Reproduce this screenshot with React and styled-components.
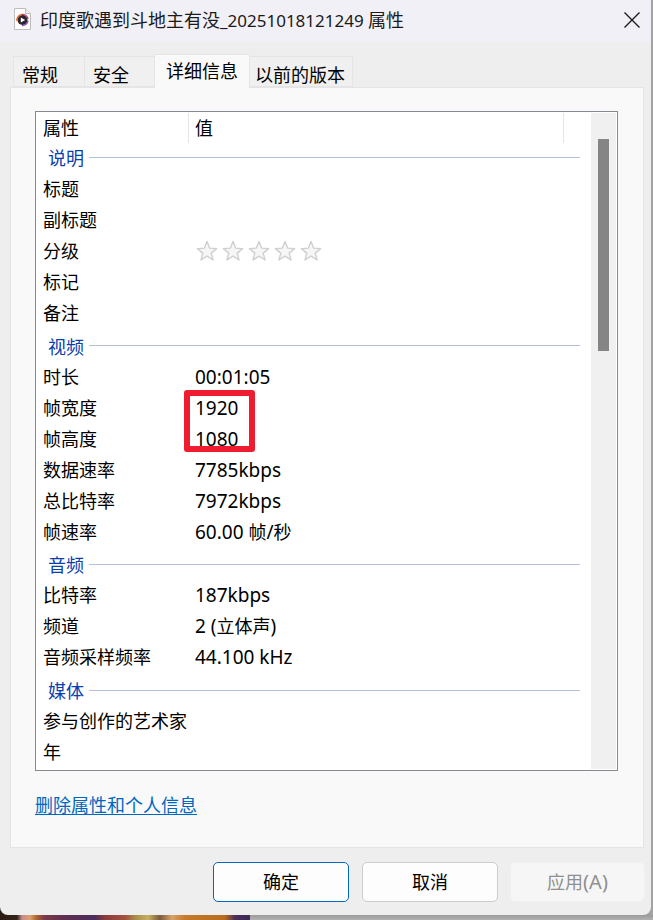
import React from "react";
import styled, { createGlobalStyle } from "styled-components";

const Global = createGlobalStyle`
  html, body { margin: 0; padding: 0; width: 653px; height: 920px; overflow: hidden; background: #a3a3a3; }
  * { box-sizing: border-box; }
  body { font-family: "Noto Sans", "Noto Sans CJK SC", sans-serif; font-size: 18px; color: #000; }
`;

const Page = styled.div`
  width: 653px; height: 920px; display: flex; flex-direction: column; overflow: hidden;
  background: linear-gradient(90deg, #2a1c14 0, #2a1c14 12px, #a3a3a3 12px);
`;
const Win = styled.div`
  width: 651px; height: 915px; flex: none; background: #eeeeee;
  border-radius: 0 0 8px 8px; display: flex; flex-direction: column;
`;
const Wallpaper = styled.div`
  height: 5px; flex: none;
  background:
    linear-gradient(90deg, #2a1c14 0, #33241a 17px, #c98a8a 22px, #d9a070 30px, #b3682f 36px, #7a3a4a 44px, #5e2f50 65px, #4d2c5c 95px, #8a3c3a 105px, #a3503e 125px, #a88c4a 135px, #c4b060 148px, #7c5a3e 160px, #d6a26a 172px, #c8792a 185px, #b86a1e 225px, #4a2f5a 235px, #3d2a55 250px) left top / 250px 100% no-repeat,
    linear-gradient(180deg, #9a9a9a, #b2b2b2);
`;
const TitleBar = styled.div`
  height: 42px; flex: none; background: #f2f0f7; display: flex; align-items: center; padding-left: 14px;
`;
const FileSvg = styled.svg`
  flex: none; margin-top: -4px;
`;
const Title = styled.div`
  margin-left: 9px; font-size: 18px; line-height: 24px; color: #1a1a1a; white-space: nowrap; flex: 1; margin-top: -2px;
`;
const TitleNum = styled.span` font-size: 17px; `;
const Close = styled.div`
  width: 18px; height: 18px; margin-right: 10px; margin-top: -3px; display: flex;
`;
const Tabs = styled.div`
  height: 45px; flex: none; display: flex; align-items: flex-end; padding-left: 13px; position: relative; z-index: 1;
`;
const Tab = styled.div`
  width: ${p => p.$w}px; height: 31px; flex: none;
  border: 1px solid #e5e5e5; margin-left: -1px;
  background: #f0f0f0; line-height: 24px; white-space: nowrap;
  display: flex; align-items: center; padding: 6px 0 0 ${p => p.$left}px;
  &:first-child { margin-left: 0; }
`;
const ActiveTab = styled.div`
  width: ${p => p.$w}px; height: 34px; flex: none;
  border: 1px solid #e5e5e5; border-bottom: none; margin: 0 0 -1px -1px;
  background: #f9f9f9; line-height: 24px; white-space: nowrap; position: relative;
  display: flex; align-items: center; justify-content: center; padding-bottom: 2px;
`;
const Panel = styled.div`
  height: 761px; flex: none; margin: 0 7px 0 10px; background: #f9f9f9; border: 1px solid #e5e5e5;
  padding: 23px 25px 0 24px; display: flex; flex-direction: column;
`;
const ListBox = styled.div`
  height: 660px; flex: none; border: 1px solid #868a91; background: #fff; display: flex; padding: 1px; overflow: hidden;
`;
const ListBody = styled.div`
  flex: 1; min-width: 0; position: relative;
`;
const Header = styled.div`
  height: 30px; display: flex; align-items: center; line-height: 24px;
`;
const HeadCell = styled.div`
  width: ${p => p.$w}px; height: 30px; border-right: 1px solid #e5e5e5;
  padding-left: 6px; display: flex; align-items: center;
`;
const Group = styled.div`
  height: ${p => p.$h}px; display: flex; align-items: center; color: #0a3fae;
  padding: ${p => p.$top}px 11px ${p => p.$bottom}px 11px;
`;
const GroupLine = styled.div`
  flex: 1; height: 1px; background: #b4c0db; margin-left: 5px;
`;
const Row = styled.div`
  height: 31px; display: flex; align-items: center; white-space: nowrap; line-height: 24px;
`;
const Name = styled.div` width: 152px; padding-left: 6px; flex: none; `;
const Value = styled.div` flex: none; display: flex; align-items: center; padding-left: 6px; font-size: 19px; white-space: pre; `;
const Cjk = styled.span` font-size: 18px; `;
const Stars = styled.div` display: flex; gap: 4px; margin-left: 1px; `;
const Mark = styled.div`
  position: absolute; left: 147px; top: 277px; width: 71px; height: 62px;
  border: 6px solid #ee1c2e; border-radius: 3px;
`;
const Scroll = styled.div`
  width: 25px; flex: none; background: #f0f0f0; display: flex; justify-content: center; padding-top: 26px;
`;
const Thumb = styled.div` width: 11px; height: 212px; background: #858585; `;
const LinkRow = styled.a`
  margin-top: 22px; color: #0067c0; text-decoration: underline; line-height: 24px; align-self: flex-start; text-underline-offset: 2px;
`;
const Footer = styled.div`
  flex: 1; display: flex; padding: 14px 0 0 213px; gap: 13px;
`;
const Btn = styled.div`
  width: ${p => p.$w}px; height: 40px; flex: none; border-radius: 5px; display: flex; align-items: center; justify-content: center;
  padding-bottom: 2px;
  background: ${p => (p.$disabled ? "#f6f6f6" : "#fdfdfd")};
  border: 1px solid ${p => (p.$primary ? "#0067c0" : p.$disabled ? "#f0f0f0" : "#cccccc")};
  color: ${p => (p.$disabled ? "#8f8f8f" : "#000")};
  &:last-child { margin-left: -1px; }
`;
const BtnLatin = styled.span` font-size: 20px; `;

const Star = () => (
  <svg width="22" height="22" viewBox="0 0 22 22">
    <path d="M11 1.5l2.6 6.6 7 .5-5.4 4.5 1.8 6.9L11 16.2 5 20l1.8-6.9L1.4 8.6l7-.5z" fill="#f6f6f6" stroke="#cfcfcf" strokeWidth="1.4" strokeLinejoin="round" />
  </svg>
);

const FileIcon = () => (
  <FileSvg width="17" height="22" viewBox="0 0 17 22">
    <path d="M.5.5h11l5 5v16H.5z" fill="#fff" stroke="#bdbdbd" />
    <path d="M11.5.5v5h5" fill="#eee" stroke="#bdbdbd" />
    <circle cx="8.5" cy="12" r="5" fill="#2a2430" />
    <path d="M3 13a5.6 5.6 0 0 1 5-6.6" fill="none" stroke="#ec6a28" strokeWidth="1.5" />
    <path d="M8 6.4a5.6 5.6 0 0 1 6 4.6" fill="none" stroke="#b9405a" strokeWidth="1.5" />
    <path d="M14 12.5a5.6 5.6 0 0 1-6 5" fill="none" stroke="#8a4fa8" strokeWidth="1.5" />
    <path d="M6.8 9.4l4.4 2.6-4.4 2.6z" fill="#fff" />
  </FileSvg>
);

const stars = <Stars><Star /><Star /><Star /><Star /><Star /></Stars>;

const sections = [
  { title: "说明", h: 30, top: 0, bottom: 2, rows: [["标题"], ["副标题"], ["分级", stars], ["标记"], ["备注"]] },
  { title: "视频", h: 33, top: 2, bottom: 0, rows: [["时长", "00:01:05"], ["帧宽度", "1920"], ["帧高度", "1080"], ["数据速率", "7785kbps"], ["总比特率", "7972kbps"], ["帧速率", <>60.00 <Cjk>帧</Cjk>/<Cjk>秒</Cjk></>]] },
  { title: "音频", h: 32, top: 2, bottom: 0, rows: [["比特率", "187kbps"], ["频道", <>2 (<Cjk>立体声</Cjk>)</>], ["音频采样频率", "44.100 kHz"]] },
  { title: "媒体", h: 33, top: 3, bottom: 0, rows: [["参与创作的艺术家"], ["年"]] },
];

export default function App() {
  return (
    <Page>
      <Global />
      <Win>
        <TitleBar>
          <FileIcon />
          <Title>印度歌遇到斗地主有没<TitleNum>_20251018121249 </TitleNum>属性</Title>
          <Close>
            <svg width="18" height="18" viewBox="0 0 18 18">
              <path d="M1.5 1.5l15 15M16.5 1.5l-15 15" stroke="#1a1a1a" strokeWidth="1.4" fill="none" />
            </svg>
          </Close>
        </TitleBar>
        <Tabs>
          <Tab $w={72} $left={8}>常规</Tab>
          <Tab $w={71} $left={8}>安全</Tab>
          <ActiveTab $w={96}>详细信息</ActiveTab>
          <Tab $w={104} $left={5}>以前的版本</Tab>
        </Tabs>
        <Panel>
          <ListBox>
            <ListBody>
              <Header>
                <HeadCell $w={152}>属性</HeadCell>
                <HeadCell $w={375}>值</HeadCell>
              </Header>
              {sections.map(s => (
                <React.Fragment key={s.title}>
                  <Group $h={s.h} $top={s.top} $bottom={s.bottom}>{s.title}<GroupLine /></Group>
                  {s.rows.map(([n, v]) => (
                    <Row key={n}>
                      <Name>{n}</Name>
                      <Value>{v}</Value>
                    </Row>
                  ))}
                </React.Fragment>
              ))}
              <Mark />
            </ListBody>
            <Scroll><Thumb /></Scroll>
          </ListBox>
          <LinkRow>删除属性和个人信息</LinkRow>
        </Panel>
        <Footer>
          <Btn $w={136} $primary>确定</Btn>
          <Btn $w={136}>取消</Btn>
          <Btn $w={135} $disabled>应用<BtnLatin>(A)</BtnLatin></Btn>
        </Footer>
      </Win>
      <Wallpaper />
    </Page>
  );
}
